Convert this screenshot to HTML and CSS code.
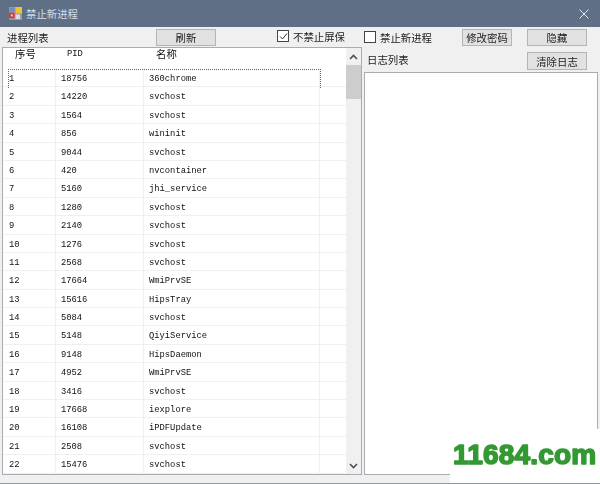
FILE: index.html
```html
<!DOCTYPE html>
<html>

<head>
  <title>禁止新进程</title>
  <link rel="stylesheet" href="styles.css">
</head>

<body>
  <div class="window">
    <div class="titlebar">
      <svg class="app-icon" width="13" height="13" viewBox="0 0 14 14">
        <rect x="0" y="0" width="14" height="14" fill="#8d99a8" />
        <rect x="1" y="1" width="5" height="4" fill="#6f8fc4" />
        <rect x="7" y="0" width="7" height="7" fill="#f2c230" />
        <rect x="0" y="6" width="6" height="6" fill="#e23a30" />
        <rect x="7" y="8" width="5" height="5" fill="#d8dde4" />
        <rect x="2" y="8" width="2" height="2" fill="#f4d0c8" />
      </svg>
      <span class="title-text">禁止新进程</span>
      <svg class="close-icon" width="10" height="10" viewBox="0 0 10 10">
        <path d="M0.5 0.5 L9.5 9.5 M9.5 0.5 L0.5 9.5" stroke="#e4e8ee" stroke-width="1" fill="none" />
      </svg>
    </div>

    <div class="toolbar">
      <span class="label">进程列表</span>
      <button class="btn btn-wide">刷新</button>
      <label class="check">
        <span class="box">
          <svg width="9" height="9" viewBox="0 0 9 9">
            <path d="M1 4.5 L3.5 7 L8 1.5" stroke="#333" stroke-width="1" fill="none" />
          </svg>
        </span>
        不禁止屏保
      </label>
      <label class="check check-off"><span class="box"></span>禁止新进程</label>
      <button class="btn btn-narrow">修改密码</button>
      <button class="btn btn-wide">隐藏</button>
    </div>

    <div class="content">
      <div class="process-panel">
        <div class="process-list">
          <div class="list-head">
            <span class="head-num">序号</span>
            <span class="head-pid">PID</span>
            <span class="head-name">名称</span>
          </div>
          <div class="row focused"><span>1</span><span>18756</span><span>360chrome</span><span></span></div>
          <div class="row"><span>2</span><span>14220</span><span>svchost</span><span></span></div>
          <div class="row"><span>3</span><span>1564</span><span>svchost</span><span></span></div>
          <div class="row"><span>4</span><span>856</span><span>wininit</span><span></span></div>
          <div class="row"><span>5</span><span>9044</span><span>svchost</span><span></span></div>
          <div class="row"><span>6</span><span>420</span><span>nvcontainer</span><span></span></div>
          <div class="row"><span>7</span><span>5160</span><span>jhi_service</span><span></span></div>
          <div class="row"><span>8</span><span>1280</span><span>svchost</span><span></span></div>
          <div class="row"><span>9</span><span>2140</span><span>svchost</span><span></span></div>
          <div class="row"><span>10</span><span>1276</span><span>svchost</span><span></span></div>
          <div class="row"><span>11</span><span>2568</span><span>svchost</span><span></span></div>
          <div class="row"><span>12</span><span>17664</span><span>WmiPrvSE</span><span></span></div>
          <div class="row"><span>13</span><span>15616</span><span>HipsTray</span><span></span></div>
          <div class="row"><span>14</span><span>5084</span><span>svchost</span><span></span></div>
          <div class="row"><span>15</span><span>5148</span><span>QiyiService</span><span></span></div>
          <div class="row"><span>16</span><span>9148</span><span>HipsDaemon</span><span></span></div>
          <div class="row"><span>17</span><span>4952</span><span>WmiPrvSE</span><span></span></div>
          <div class="row"><span>18</span><span>3416</span><span>svchost</span><span></span></div>
          <div class="row"><span>19</span><span>17668</span><span>iexplore</span><span></span></div>
          <div class="row"><span>20</span><span>16108</span><span>iPDFUpdate</span><span></span></div>
          <div class="row"><span>21</span><span>2508</span><span>svchost</span><span></span></div>
          <div class="row"><span>22</span><span>15476</span><span>svchost</span><span></span></div>
        </div>
        <div class="scrollbar">
          <svg width="9" height="6" viewBox="0 0 9 6">
            <path d="M1 5 L4.5 1.5 L8 5" stroke="#505050" stroke-width="1.6" fill="none" />
          </svg>
          <div class="thumb"></div>
          <svg class="arrow-down" width="9" height="6" viewBox="0 0 9 6">
            <path d="M1 1 L4.5 4.5 L8 1" stroke="#505050" stroke-width="1.6" fill="none" />
          </svg>
        </div>
      </div>

      <div class="log-panel">
        <div class="log-head">
          <span class="label">日志列表</span>
          <button class="btn btn-wide">清除日志</button>
        </div>
        <div class="log-box"></div>
      </div>
    </div>

    <!-- marca de agua encima de la ventana -->
    <svg class="watermark" width="150" height="55" viewBox="0 0 150 55">
      <text class="watermark-text" x="3" y="35">11684.com</text>
    </svg>
  </div>
</body>

</html>
```

FILE: styles.css
```css
* {
  box-sizing: border-box;
}

html,
body {
  margin: 0;
  padding: 0;
}

body {
  background-color: #f0f0f0;
  font-family: "Noto Sans CJK SC", "Liberation Sans", sans-serif;
  font-size: 10.4px;
  color: #222;
}

.window {
  position: relative;
  width: 600px;
  height: 484px;
  overflow: hidden;
  border-bottom: 1px solid #8f97a3;
  filter: blur(0.35px);
}

/* Barra de titulo */
.titlebar {
  display: flex;
  align-items: center;
  height: 27px;
  padding: 0 11px 0 9px;
  background-color: #5f6f86;
  color: #d6dce4;
}

.app-icon {
  flex: none;
}

.title-text {
  margin-left: 4px;
  line-height: 27px;
}

.close-icon {
  margin-left: auto;
}

/* Barra de botones */
.toolbar {
  display: grid;
  grid-template-columns: 149px 121px 87px 98px 65px 60px;
  align-items: start;
  height: 20px;
  padding: 2px 0 0 7px;
}

.label {
  line-height: 16px;
  margin-top: 1px;
}

.btn {
  height: 17px;
  padding: 0;
  background-color: #e1e1e1;
  border: 1px solid #b4b4b4;
  font: inherit;
  line-height: 15px;
  color: #222;
}

.btn-wide {
  width: 60px;
}

.btn-narrow {
  width: 50px;
}

.check {
  display: flex;
  align-items: center;
  gap: 4px;
  height: 14px;
  white-space: nowrap;
}

.check-off {
  margin-top: 1px;
}

.box {
  display: flex;
  align-items: center;
  justify-content: center;
  width: 12px;
  height: 12px;
  background-color: #fff;
  border: 1px solid #444;
}

/* Contenido principal */
.content {
  display: flex;
  height: 428px;
}

.process-panel {
  display: flex;
  width: 360px;
  height: 428px;
  margin-left: 2px;
  background-color: #fff;
  border: 1px solid #a9adb3;
}

.process-list {
  flex: 1;
  font-family: "Liberation Mono", monospace;
  font-size: 8.8px;
  color: #111;
}

.list-head {
  display: grid;
  grid-template-columns: 57px 88px 1fr;
  height: 21px;
  line-height: 12px;
}

.head-num,
.head-name {
  font-family: "Noto Sans CJK SC", sans-serif;
  font-size: 10.4px;
}

.head-num {
  padding-left: 12px;
}

.head-pid {
  padding-left: 7px;
}

.head-name {
  padding-left: 8px;
}

.row {
  position: relative;
  display: grid;
  grid-template-columns: 53px 88px 176px 1fr;
  grid-template-rows: 18.4px;
  height: 18.4px;
  line-height: 13px;
}

.row span {
  padding: 4px 0 0 5px;
  border-right: 1px solid #f0f0f0;
  border-bottom: 1px solid #f0f0f0;
}

.row span:first-child {
  padding-left: 6px;
}

.row span:last-child {
  border-right: 0;
}

/* Rectangulo de foco de la primera fila */
.row.focused::after {
  content: "";
  position: absolute;
  top: 0;
  left: 5px;
  width: 311px;
  height: 18px;
  border: 1px dotted #666;
  border-bottom: 0;
}

.scrollbar {
  display: flex;
  flex-direction: column;
  align-items: center;
  flex: none;
  width: 15px;
  padding-top: 6px;
  background-color: #f0f0f0;
}

.thumb {
  width: 15px;
  height: 34px;
  margin-top: 5px;
  background-color: #cdcdcd;
}

.arrow-down {
  margin-top: auto;
  margin-bottom: 5px;
}

/* Panel de registro */
.log-panel {
  display: flex;
  flex-direction: column;
  width: 234px;
  margin-left: 2px;
}

.log-head {
  display: flex;
  justify-content: space-between;
  align-items: flex-start;
  height: 25px;
  padding: 5px 11px 0 3px;
}

.log-head .label {
  margin-top: 0;
}

.log-head .btn {
  height: 18px;
}

.log-box {
  flex: 1;
  background-color: #fff;
  border: 1px solid #a9adb3;
}

/* Marca de agua */
.watermark {
  position: absolute;
  right: 0;
  bottom: -1px;
  background-color: #fff;
}

.watermark-text {
  font-family: "Liberation Sans", sans-serif;
  font-size: 28px;
  font-weight: bold;
  letter-spacing: 0.2px;
  fill: #339933;
  stroke: #339933;
  stroke-width: 1.6px;
  stroke-linejoin: round;
}
```
